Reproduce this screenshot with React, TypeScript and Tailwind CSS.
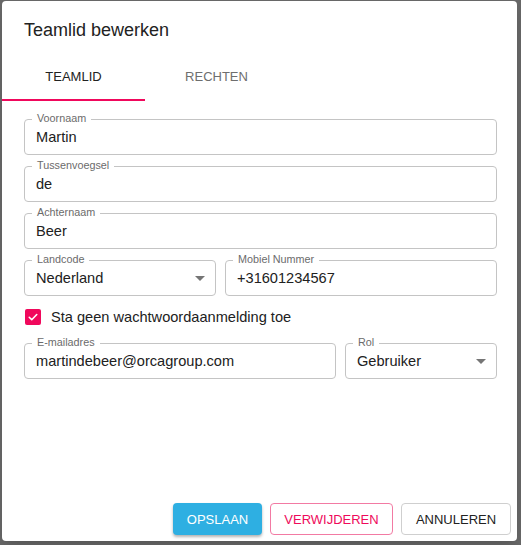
import type { ReactNode } from 'react';

function Field({
  label,
  value,
  select = false,
  className = '',
}: {
  label: string;
  value: string;
  select?: boolean;
  className?: string;
}) {
  return (
    <div
      className={`relative flex h-[36px] items-center rounded-[4px] border border-[#c4c4c4] pl-[11px] pr-[10px] ${className}`}
    >
      <span className="absolute -top-[7px] left-[7px] bg-white px-[5px] text-[10.8px] leading-none text-[#6b6b6b]">
        {label}
      </span>
      <span className="flex-1 text-[14.6px] leading-[17px] text-[#212121]">{value}</span>
      {select && (
        <svg width="10" height="5" viewBox="0 0 10 5" className="shrink-0">
          <polygon points="0,0 10,0 5,5" fill="#757575" />
        </svg>
      )}
    </div>
  );
}

function Button({
  children,
  className,
}: {
  children: ReactNode;
  className: string;
}) {
  return (
    <button
      type="button"
      className={`flex h-[32px] items-center justify-center rounded-[4px] text-[13px] leading-none ${className}`}
    >
      {children}
    </button>
  );
}

export default function App() {
  return (
    <div className="min-h-screen bg-[#676767] pl-[2px] pt-px font-['Liberation_Sans',Arial,sans-serif]">
      <div className="flex h-[540px] w-[515px] flex-col rounded-[4px] bg-white shadow-lg">
        <h2 className="pl-[22px] pt-[17px] text-[18px] leading-[24px] text-[#222]">
          Teamlid bewerken
        </h2>

        <div className="mt-[11px] flex h-[48px]">
          <div className="relative flex w-[143px] items-center justify-center text-[13px] text-[#222]">
            TEAMLID
            <span className="absolute bottom-0 left-0 right-0 h-[2px] bg-[#f0085c]" />
          </div>
          <div className="flex w-[143px] items-center justify-center text-[13px] text-[#6e6e6e]">
            RECHTEN
          </div>
        </div>

        <div className="mt-[18px] flex flex-col pl-[22px] pr-[20px]">
          <Field label="Voornaam" value="Martin" />
          <Field label="Tussenvoegsel" value="de" className="mt-[11px]" />
          <Field label="Achternaam" value="Beer" className="mt-[11px]" />
          <div className="mt-[11px] flex gap-[9px]">
            <Field label="Landcode" value="Nederland" select className="w-[192px]" />
            <Field label="Mobiel Nummer" value="+31601234567" className="flex-1" />
          </div>

          <label className="mt-[13px] flex h-[16px] items-center gap-[10px] pl-px">
            <span className="flex h-[16px] w-[16px] items-center justify-center rounded-[2px] bg-[#f0085c]">
              <svg width="12" height="12" viewBox="0 0 24 24">
                <path
                  d="M4.5 12.5l5 5L19.5 7"
                  fill="none"
                  stroke="white"
                  strokeWidth="3.2"
                  strokeLinecap="round"
                  strokeLinejoin="round"
                />
              </svg>
            </span>
            <span className="text-[14.6px] leading-[17px] text-[#212121]">
              Sta geen wachtwoordaanmelding toe
            </span>
          </label>

          <div className="mt-[18px] flex gap-[9px]">
            <Field label="E-mailadres" value="martindebeer@orcagroup.com" className="w-[312px]" />
            <Field label="Rol" value="Gebruiker" select className="flex-1" />
          </div>
        </div>

        <div className="mt-auto flex justify-end gap-[8px] pb-[6px] pr-[6px]">
          <Button className="w-[89px] bg-[#2eafe2] text-white shadow-[0_2px_3px_rgba(0,0,0,0.3)]">
            OPSLAAN
          </Button>
          <Button className="w-[123px] border border-[#f27aa3] text-[#ee0a5b]">
            VERWIJDEREN
          </Button>
          <Button className="w-[110px] border border-[#cfcfcf] text-[#222]">
            ANNULEREN
          </Button>
        </div>
      </div>
    </div>
  );
}
